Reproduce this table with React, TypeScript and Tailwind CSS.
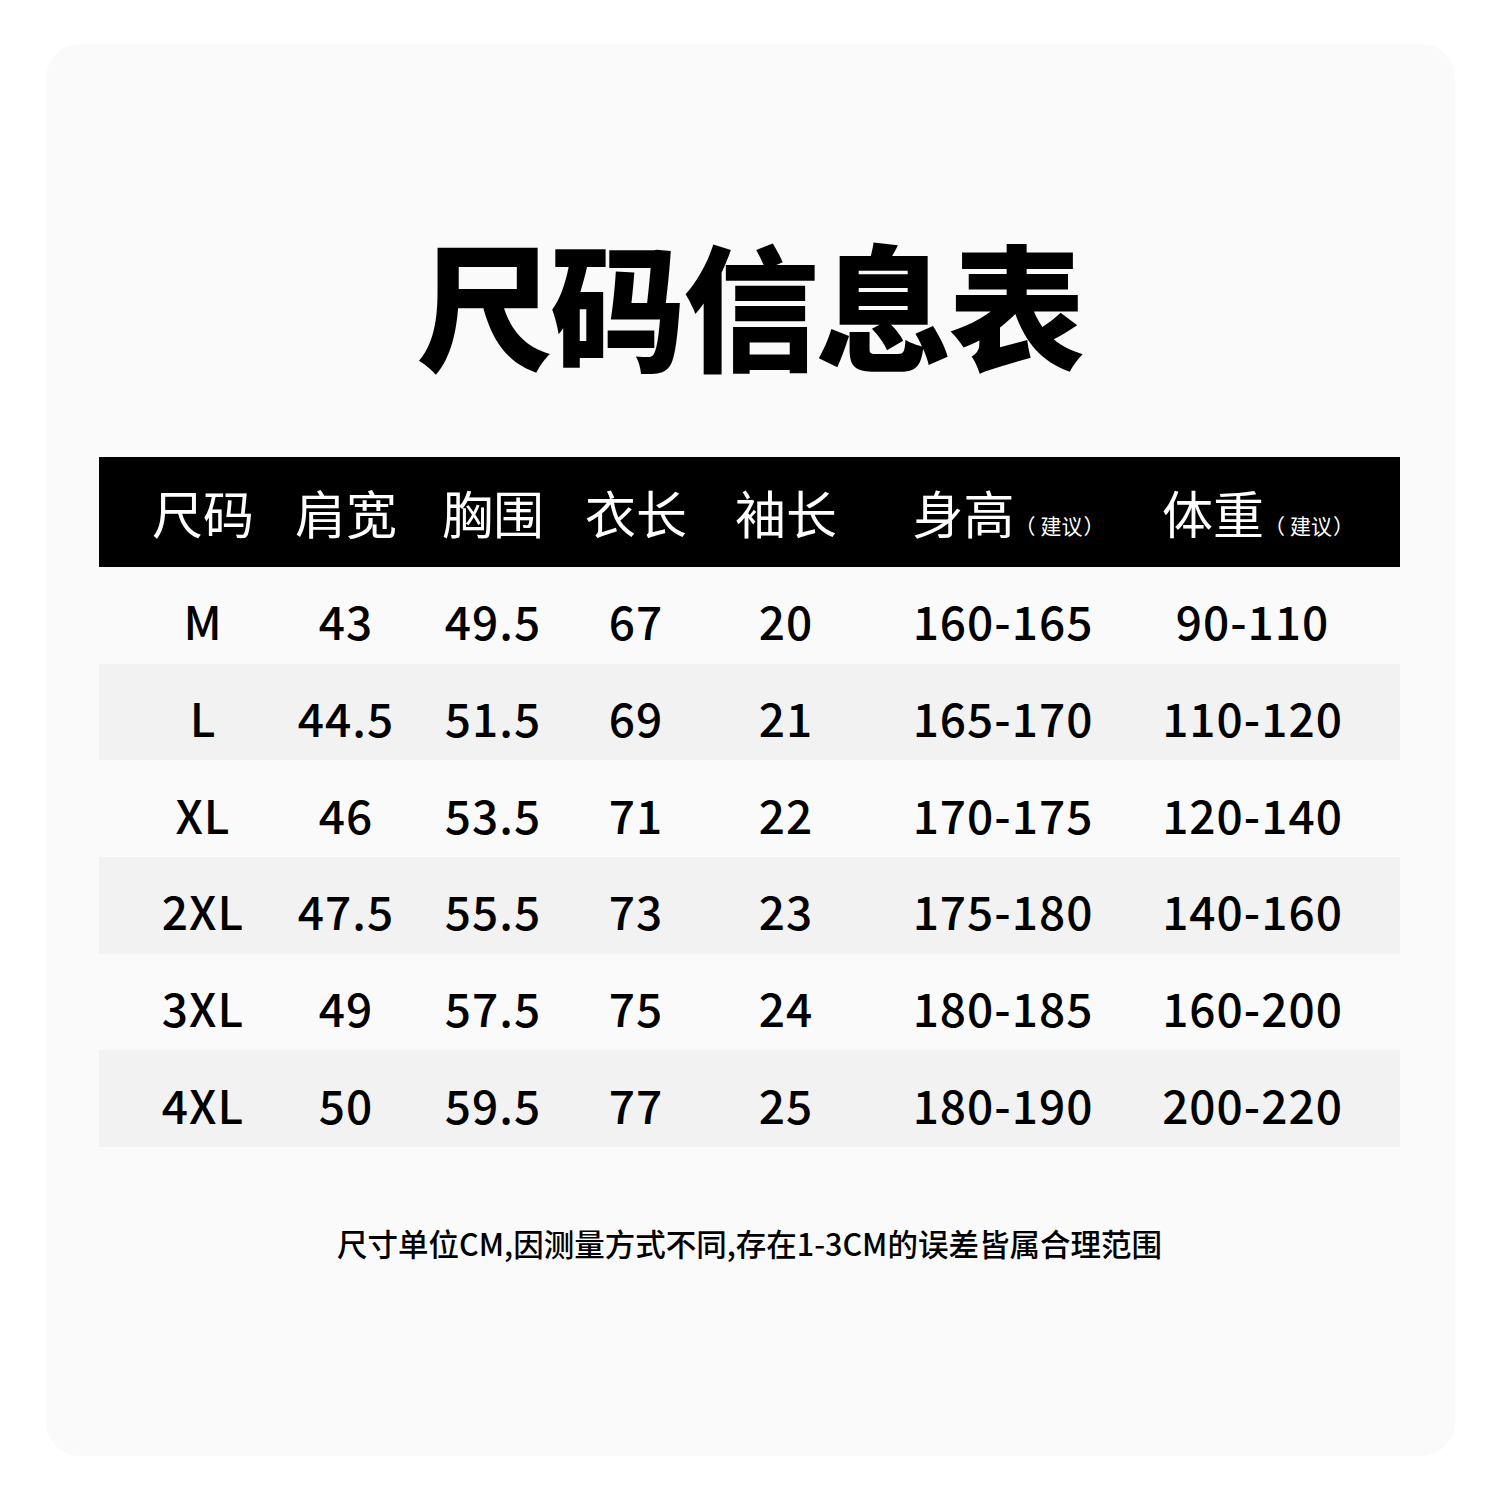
import React from "react";

const rows = [
  ["M", "43", "49.5", "67", "20", "160-165", "90-110"],
  ["L", "44.5", "51.5", "69", "21", "165-170", "110-120"],
  ["XL", "46", "53.5", "71", "22", "170-175", "120-140"],
  ["2XL", "47.5", "55.5", "73", "23", "175-180", "140-160"],
  ["3XL", "49", "57.5", "75", "24", "180-185", "160-200"],
  ["4XL", "50", "59.5", "77", "25", "180-190", "200-220"],
];

const font = { fontFamily: '"Noto Sans CJK SC", "Noto Sans", sans-serif' };
const grid = "grid grid-cols-[208px_78px_216px_70px_230px_204px_1fr]";

export default function App() {
  return (
    <div className="w-[1500px] h-[1500px] bg-white px-[46px] pt-[44px] pb-[44px]" style={font}>
      <div className="w-[1409px] h-[1412px] bg-[#fafafa] rounded-[34px] pl-[53px] pr-[55px] pt-[190px] flex flex-col">
        <div className="text-center text-[136px] leading-none font-black text-black tracking-[-3px]">尺码信息表</div>
        <div className="mt-[87px]">
          <div className={`${grid} h-[110px] bg-black text-white items-center`}>
            {["尺码", "肩宽", "胸围", "衣长", "袖长"].map((h) => (
              <div key={h} className="flex justify-center whitespace-nowrap text-[51px] leading-none font-normal">
                {h}
              </div>
            ))}
            {["身高", "体重"].map((h) => (
              <div key={h} className="flex justify-center items-baseline whitespace-nowrap pl-[11px]">
                <span className="text-[51px] leading-none font-normal">{h}</span>
                <span className="text-[21px] leading-none font-normal mr-[5px]">（</span>
                <span className="text-[21px] leading-none font-normal">建议</span>
                <span className="text-[21px] leading-none font-normal ml-[1px]">）</span>
              </div>
            ))}
          </div>
          {rows.map((r, i) => (
            <div
              key={r[0]}
              className={`${grid} h-[96.7px] items-center ${i % 2 === 1 ? "bg-[#f2f2f2]" : ""}`}
            >
              {r.map((c, j) => (
                <div key={j} className="flex justify-center whitespace-nowrap pt-[10px] text-[46px] leading-none font-medium text-black tracking-[1px]">
                  {c}
                </div>
              ))}
            </div>
          ))}
        </div>
        <div className="mt-[81px] text-center text-[30.5px] leading-none font-medium text-black">
          尺寸单位CM,因测量方式不同,存在1-3CM的误差皆属合理范围
        </div>
      </div>
    </div>
  );
}
